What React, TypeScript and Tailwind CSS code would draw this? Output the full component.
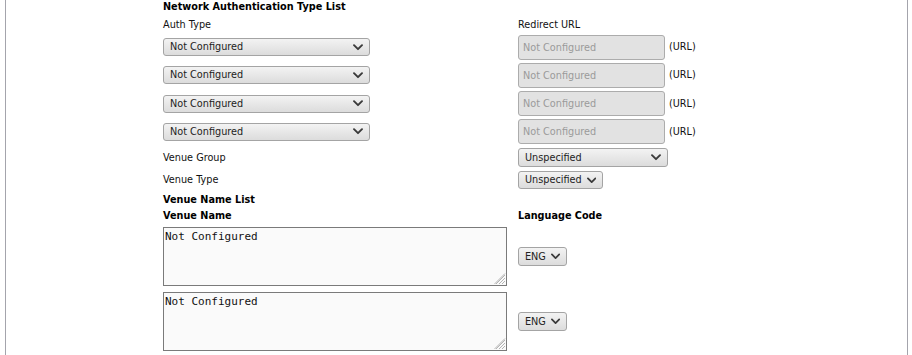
import React from "react";

const font = "font-['DejaVu_Sans',Verdana,sans-serif]";

function Chevron({ className = "" }: { className?: string }) {
  return (
    <svg width="10" height="7" viewBox="0 0 10 7" className={className}>
      <path d="M1 1.2 L5 5.2 L9 1.2" fill="none" stroke="#3a3a3a" strokeWidth="1.9" strokeLinecap="round" strokeLinejoin="round" />
    </svg>
  );
}

function FakeSelect({ label, width, spread = true, height = "h-[18px]" }: { label: string; width: string; spread?: boolean; height?: string }) {
  return (
    <div
      className={`${width} ${height} flex items-center ${spread ? "justify-between" : "gap-[5px]"} pl-[6px] pr-[6px] rounded-[3px] border border-[#a4a4a4] bg-gradient-to-b from-[#f3f3f3] to-[#dcdcdc] text-[#222] text-[9.7px] leading-[12px] shrink-0`}
    >
      <span>{label}</span>
      <Chevron />
    </div>
  );
}

function UrlRow({ h }: { h: string }) {
  return (
    <div className={`grid grid-cols-[355px_auto] items-center ${h}`}>
      <FakeSelect label="Not Configured" width="w-[207px]" />
      <div className="flex items-center">
        <input
          disabled
          placeholder="Not Configured"
          className={`w-[147px] h-[25px] rounded-[3px] border border-[#acacac] bg-[#e2e2e2] px-[4px] text-[9.7px] ${font} placeholder:text-[#9a9a9a] outline-none`}
        />
        <span className="ml-[4px] text-[9.7px] leading-[12px] text-[#111]">(URL)</span>
      </div>
    </div>
  );
}

function Grip() {
  return (
    <svg width="12" height="12" viewBox="0 0 12 12" className="absolute right-[1px] bottom-[1px] pointer-events-none">
      <path d="M11 2 L2 11 M11 5 L5 11 M11 8 L8 11 M11 0.5 L0.5 11" stroke="#b4b4b4" strokeWidth="1" />
    </svg>
  );
}

function TextRow() {
  return (
    <div className="grid grid-cols-[355px_auto] items-center h-[59px]">
      <div className="relative w-[344px] h-[59px]">
        <textarea
          readOnly
          defaultValue="Not Configured"
          className="block w-[344px] h-[59px] border border-[#7a7a7a] bg-[#fafafa] pl-[1px] pt-[2px] text-[11px] leading-[13px] text-[#111] font-['DejaVu_Sans_Mono',monospace] outline-none resize-none"
        />
        <Grip />
      </div>
      <FakeSelect label="ENG" width="w-[49px]" height="h-[19px]" spread={false} />
    </div>
  );
}

export default function App() {
  return (
    <div className={`bg-white w-[912px] h-[355px] overflow-hidden ${font}`}>
      <div className="ml-[5px] w-[903px] h-[355px] border-x border-[#a4a4ac] pl-[157px] text-[9.7px] leading-[12px] text-[#111]">
        <div className="h-[19px] pt-[1px] font-bold text-black">Network Authentication Type List</div>
        <div className="grid grid-cols-[355px_auto] h-[14px]">
          <div>Auth Type</div>
          <div>Redirect URL</div>
        </div>
        <UrlRow h="h-[28px]" />
        <UrlRow h="h-[28px]" />
        <UrlRow h="h-[29px]" />
        <UrlRow h="h-[27px]" />
        <div className="grid grid-cols-[355px_auto] items-center h-[25px]">
          <div>Venue Group</div>
          <FakeSelect label="Unspecified" width="w-[150px]" height="h-[19px]" />
        </div>
        <div className="grid grid-cols-[355px_auto] items-center h-[20px]">
          <div>Venue Type</div>
          <FakeSelect label="Unspecified" width="w-[85px]" spread={false} />
        </div>
        <div className="h-[16px] pt-[4px] font-bold text-black">Venue Name List</div>
        <div className="grid grid-cols-[355px_auto] h-[21px] pt-[4px] font-bold text-black">
          <div>Venue Name</div>
          <div>Language Code</div>
        </div>
        <div className="flex flex-col gap-[6px]">
          <TextRow />
          <TextRow />
        </div>
      </div>
    </div>
  );
}
